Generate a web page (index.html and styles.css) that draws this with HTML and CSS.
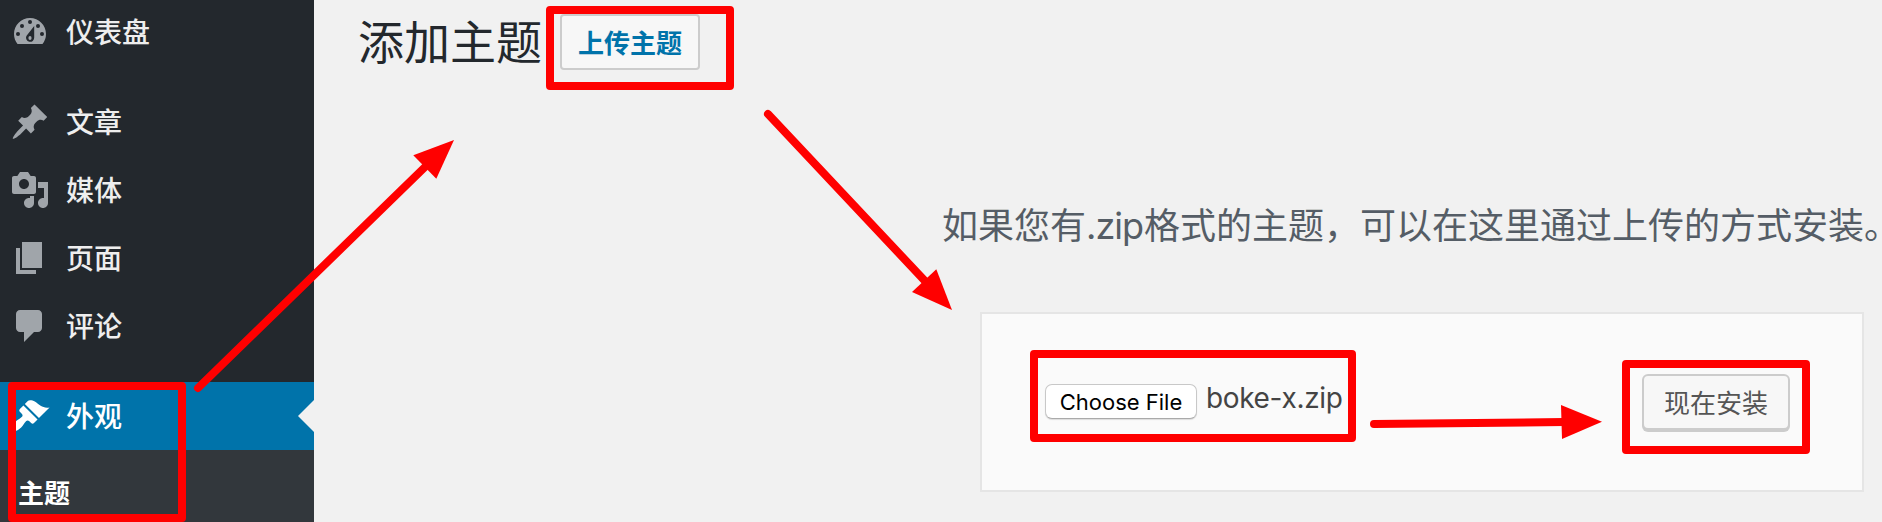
FILE: index.html
```html
<!DOCTYPE html>
<html lang="zh-CN">
<head>
<meta charset="utf-8">
<title>添加主题</title>
<link rel="stylesheet" href="styles.css">
</head>
<body>
<div class="app">
  <nav class="sidebar">
    <a class="item first"><svg class="icon" viewBox="0 0 20 20"><path fill-rule="evenodd" d="M3.76 16h12.48A7.95 7.95 0 0 0 18 11c0-4.42-3.58-8-8-8s-8 3.58-8 8c0 1.9.66 3.64 1.76 5z"/><g class="cut"><circle cx="10" cy="5" r="1"/><circle cx="6" cy="7" r="1"/><circle cx="14" cy="7" r="1"/><circle cx="4" cy="11" r="1"/><circle cx="16" cy="11" r="1"/><path d="M12.1 7v5.8a2.05 2.05 0 1 1-3.9-.8z"/></g><ellipse cx="10" cy="13" rx=".8" ry="1"/></svg><span>仪表盘</span></a>
    <a class="item gap"><svg class="icon" viewBox="0 0 20 20"><path d="M10.44 3.02l1.82-1.82 6.36 6.35-1.83 1.82c-1.05-.68-2.48-.57-3.41.36l-.75.75c-.92.93-1.04 2.35-.35 3.41l-1.83 1.82-2.41-2.41-2.8 2.79c-.42.42-3.38 2.71-3.8 2.29s1.86-3.39 2.28-3.81l2.79-2.79L4.1 9.36l1.83-1.82c1.05.69 2.48.57 3.4-.36l.75-.75c.93-.92 1.05-2.35.36-3.41z"/></svg><span>文章</span></a>
    <a class="item"><svg class="icon" viewBox="0 0 20 20"><path d="M13 11V4c0-.55-.45-1-1-1h-1.67L9 1H5L3.67 3H2c-.55 0-1 .45-1 1v7c0 .55.45 1 1 1h10c.55 0 1-.45 1-1zM7 4.5c1.38 0 2.5 1.12 2.5 2.5S8.38 9.5 7 9.5 4.5 8.38 4.5 7 5.62 4.5 7 4.5zM14 6h5v10.5c0 1.38-1.12 2.5-2.5 2.5S14 17.88 14 16.5s1.12-2.5 2.5-2.5c.17 0 .34.02.5.05V9h-3V6zm-4 8.05V13h2v3.5c0 1.38-1.12 2.5-2.5 2.5S7 17.88 7 16.5 8.12 14 9.5 14c.17 0 .34.02.5.05z"/></svg><span>媒体</span></a>
    <a class="item"><svg class="icon" viewBox="0 0 20 20"><path d="M6 15V2h10v13H6zm-1 1h8v2H3V5h2v11z"/></svg><span>页面</span></a>
    <a class="item"><svg class="icon" viewBox="0 0 20 20"><path d="M5 2h9c1.1 0 2 .9 2 2v7c0 1.1-.9 2-2 2h-2l-5 5v-5H5c-1.1 0-2-.9-2-2V4c0-1.1.9-2 2-2z"/></svg><span>评论</span></a>
    <a class="item gap current"><svg class="icon" viewBox="0 0 20 20"><path d="M14.48 11.06L7.41 3.99l1.5-1.5c.5-.56 2.3-.47 3.51.32 1.21.8 1.43 1.28 2.91 2.1 1.18.64 2.45 1.26 4.45.85zm-.71.71L6.7 4.7 4.93 6.47c-.39.39-.39 1.02 0 1.41l1.06 1.06c.39.39.39 1.03 0 1.42-.6.6-1.43 1.11-2.21 1.69-.35.26-.7.53-1.01.84C1.43 14.23.4 16.08 1.4 17.07c.99 1 2.84-.03 4.18-1.36.31-.31.58-.66.85-1.02.57-.78 1.08-1.61 1.69-2.21.39-.39 1.02-.39 1.41 0l1.06 1.06c.39.39 1.02.39 1.41 0z"/></svg><span>外观</span><i class="pointer"></i></a>
    <div class="submenu"><a>主题</a></div>
  </nav>
  <main class="content">
    <header class="heading">
      <h1>添加主题</h1>
      <a class="upload-button">上传主题</a>
    </header>
    <p class="help">如果您有<span class="ext">.zip</span>格式的主题，可以在这里通过上传的方式安装<span class="stop">。</span></p>
    <form class="panel">
      <button type="button" class="choose">Choose File</button>
      <span class="filename">boke-x.zip</span>
      <button type="button" class="install">现在安装</button>
    </form>
  </main>
</div>
<svg class="marks" viewBox="0 0 1882 522">
  <g class="frames">
    <rect x="12" y="386" width="170" height="132"/>
    <rect x="550" y="10" width="180" height="76"/>
    <rect x="1034" y="354" width="318" height="84"/>
    <rect x="1626" y="364" width="180" height="86"/>
  </g>
  <g class="shafts">
    <path d="M198 388L425 167"/>
    <path d="M768 114L925 281"/>
    <path d="M1374 424L1564 422"/>
  </g>
  <g class="heads">
    <path d="M454 140L413.3 155.3L436.3 178.7z"/>
    <path d="M952 310L936.3 269.3L912 292z"/>
    <path d="M1602 421.8L1561 405L1562 439z"/>
  </g>
</svg>
</body>
</html>
```
FILE: styles.css
```css
* { box-sizing: border-box; }
body {
  margin: 0;
  width: 1882px;
  height: 522px;
  overflow: hidden;
  background: #f1f1f1;
  font-family: "Noto Sans CJK SC", sans-serif;
}
.app { display: flex; height: 522px; }

.sidebar {
  width: 314px;
  flex: none;
  display: flex;
  flex-direction: column;
  background: #23282d;
  overflow: hidden;
}
.item {
  position: relative;
  flex: none;
  display: flex;
  align-items: center;
  gap: 16px;
  height: 68px;
  padding-left: 10px;
  color: #eee;
  font-size: 28px;
  line-height: 40px;
  font-weight: 500;
}
.item span { padding-bottom: 2px; }
.first { margin-top: -2px; }
.gap { margin-top: 22px; }
.icon { width: 40px; height: 40px; fill: #a0a5aa; }
.cut { fill: #23282d; }
.current { background: #0073aa; color: #fff; }
.current .icon { fill: #fff; }
.pointer {
  position: absolute;
  right: 0;
  top: 18px;
  border: 16px solid transparent;
  border-left: 0;
  border-right-color: #f1f1f1;
}
.submenu {
  flex: 1;
  padding: 23px 0 0 18px;
  background: #32373c;
  color: #fff;
  font-size: 26px;
  line-height: 38px;
  font-weight: 700;
}

.content { flex: 1; min-width: 0; }
.heading {
  display: flex;
  align-items: flex-start;
  gap: 18px;
  height: 188px;
  padding: 14px 0 0 44px;
}
h1 {
  margin: 0;
  font-size: 46px;
  font-weight: 400;
  line-height: 50px;
  color: #23282d;
}
.upload-button {
  width: 140px;
  height: 56px;
  border: 2px solid #ccc;
  border-radius: 4px;
  background: #f7f7f7;
  color: #0073aa;
  font-size: 26px;
  font-weight: 700;
  line-height: 51px;
  padding-left: 16px;
}
.help {
  margin: 0 0 0 628px;
  height: 124px;
  font-size: 36px;
  line-height: 70px;
  color: #555d66;
  white-space: nowrap;
}
.ext {
  display: inline-block;
  width: 58px;
  font-family: Inter, sans-serif;
  letter-spacing: -1px;
  line-height: 1;
}
.stop { font-feature-settings: "halt"; }
.panel {
  display: flex;
  align-items: flex-start;
  margin-left: 666px;
  width: 884px;
  height: 180px;
  padding: 60px 0 0 63px;
  border: 2px solid #e5e5e5;
  background: #fafafa;
}
button { margin: 0; padding: 0; flex: none; }
.choose {
  margin-top: 10px;
  width: 152px;
  height: 35px;
  border: 1px solid #c8c8c8;
  border-bottom-color: #aaa;
  border-radius: 7px;
  background: #fff;
  box-shadow: 0 1px 1px rgba(0, 0, 0, .12);
  color: #000;
  font: 22px/34px Inter, sans-serif;
}
.filename {
  width: 445px;
  padding-left: 9px;
  color: #444;
  font: 28px/48px Inter, sans-serif;
  letter-spacing: -.35px;
}
.install {
  width: 148px;
  height: 56px;
  border: 2px solid #ccc;
  border-radius: 6px;
  background: #f7f7f7;
  box-shadow: 0 2px 0 #ccc;
  color: #555;
  font: 26px/50px "Noto Sans CJK SC", sans-serif;
}

.marks {
  position: absolute;
  left: 0;
  top: 0;
  width: 1882px;
  height: 522px;
  pointer-events: none;
}
.frames, .shafts {
  fill: none;
  stroke: #f00;
  stroke-width: 8;
  stroke-linejoin: round;
  stroke-linecap: round;
}
.heads { fill: #f00; }
```
